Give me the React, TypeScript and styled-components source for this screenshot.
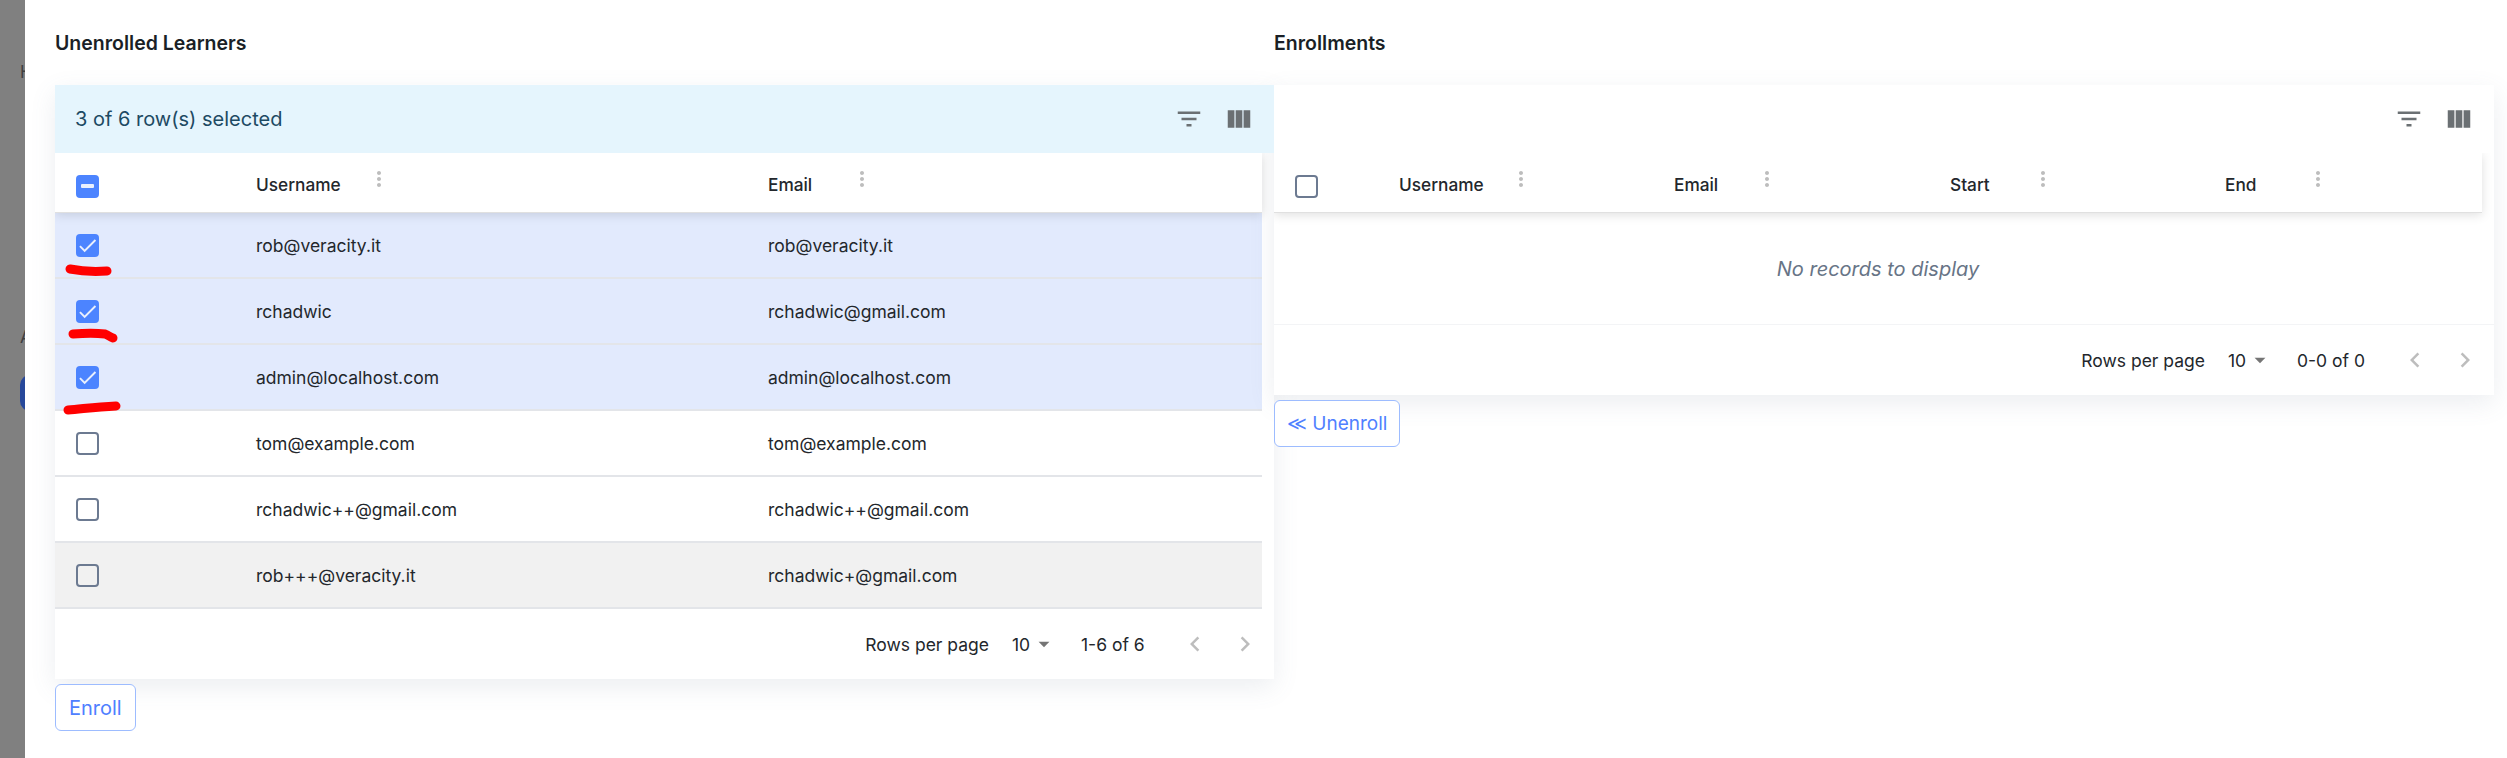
import * as React from "react";
import styled, { createGlobalStyle } from "styled-components";
import {
  MdFilterList,
  MdViewColumn,
  MdMoreVert,
  MdKeyboardArrowLeft,
  MdKeyboardArrowRight,
  MdArrowDropDown,
  MdCheck
} from "react-icons/md";

const GlobalStyle = createGlobalStyle`
  html, body, #root {
    margin: 0;
    height: 100%;
    overflow: hidden;
  }

  body {
    font-family: Inter, "Liberation Sans", sans-serif;
    color: #1a1f26;
    background: #fff;
  }

  * {
    box-sizing: border-box;
  }
`;

const Page = styled.div`
  position: relative;
  display: flex;
  height: 758px;
`;

const Backdrop = styled.div`
  width: 25px;
  flex: none;
  overflow: hidden;
  background: #808080;
  padding: 62px 0 0 20px;
  color: #3f3f3f;
  font-size: 17px;
  line-height: 20px;
  white-space: nowrap;
`;

const BackdropText = styled.div<{ $gap: number }>`
  margin-top: ${(p) => p.$gap}px;
`;

const BackdropPill = styled.div`
  margin-top: 28px;
  width: 40px;
  height: 36px;
  border-radius: 10px;
  background: #27489a;
`;

const Drawer = styled.div`
  flex: 1;
  display: grid;
  grid-template-columns: 1219px 1220px;
  padding-left: 30px;
  background: #fff;
`;

const Column = styled.section`
  display: flex;
  flex-direction: column;
  align-items: flex-start;
`;

const Title = styled.h2`
  margin: 0;
  height: 85px;
  padding-top: 32px;
  font-size: 19.5px;
  line-height: 22px;
  font-weight: 600;
  color: #1a1f26;
`;

const Card = styled.div`
  width: 100%;
  overflow: hidden;
  background: #fff;
  box-shadow: 0 8px 24px rgba(100, 116, 139, 0.12);
`;

const Toolbar = styled.div<{ $selected?: boolean }>`
  position: relative;
  z-index: 2;
  height: 68px;
  display: flex;
  align-items: center;
  padding: 0 10px 0 20px;
  background: ${(p) => (p.$selected ? "#e5f5fd" : "#fff")};
  color: #1d4a63;
  font-size: 20px;
`;

const ToolbarLabel = styled.div`
  flex: 1;
`;

const ToolButton = styled.span`
  width: 50px;
  height: 50px;
  display: flex;
  align-items: center;
  justify-content: center;
  color: #6b7073;
  font-size: 30px;
`;

const TableArea = styled.div`
  margin-right: 12px;
`;

const HeaderRow = styled.div<{ $columns: string }>`
  position: relative;
  z-index: 1;
  display: grid;
  grid-template-columns: ${(p) => p.$columns};
  height: 60px;
  align-items: center;
  background: #fff;
  border-bottom: 1px solid #e0e0e0;
  box-shadow: 0 2px 10px rgba(0, 0, 0, 0.13);
`;

const HeaderCell = styled.div`
  display: flex;
  align-items: center;
  font-size: 17.25px;
  font-weight: 500;
  color: #23272c;
  margin-top: 3px;
`;

const HeaderLabel = styled.span<{ $width: number }>`
  width: ${(p) => p.$width}px;
`;

const ColumnMenu = styled.span`
  display: flex;
  color: #bdbdbd;
  font-size: 24px;
  margin-top: -10px;
`;

const CheckCell = styled.div<{ $nudge?: number }>`
  padding-left: 21px;
  margin-top: ${(p) => p.$nudge || 0}px;
  display: flex;
  align-items: center;
`;

const CheckBox = styled.span<{ $on?: boolean }>`
  width: 23px;
  height: 23px;
  display: flex;
  align-items: center;
  justify-content: center;
  border-radius: 4px;
  color: #e9effd;
  font-size: 25px;
  background: ${(p) => (p.$on ? "#4c84ff" : "transparent")};
  border: ${(p) => (p.$on ? "none" : "2.5px solid #6c7a91")};
`;

const Dash = styled.span`
  width: 13px;
  height: 4px;
  border-radius: 1px;
  background: #e9effd;
`;

const Row = styled.div<{ $columns: string; $tone: string }>`
  display: grid;
  grid-template-columns: ${(p) => p.$columns};
  height: 66px;
  align-items: center;
  border-bottom: 2px solid #e3e5e9;
  background: ${(p) => p.$tone};
  font-size: 17.5px;
  color: #23272c;
`;

const EmptyRow = styled.div`
  height: 112px;
  display: flex;
  align-items: center;
  justify-content: center;
  padding-right: 12px;
  border-bottom: 1px solid #f3f4f6;
  font-size: 20px;
  font-style: italic;
  color: #677486;
`;

const Footer = styled.div`
  height: 70px;
  display: flex;
  align-items: center;
  justify-content: flex-end;
  padding-right: 4px;
  font-size: 17.5px;
  color: #23272c;
`;

const PageSize = styled.span`
  display: flex;
  align-items: center;
  margin-left: 23px;
  width: 69px;

  svg {
    font-size: 26px;
    color: #757575;
    margin-left: 1px;
  }
`;

const Range = styled.span<{ $width: number }>`
  width: ${(p) => p.$width}px;
`;

const PageButton = styled.span`
  width: 50px;
  height: 50px;
  display: flex;
  align-items: center;
  justify-content: center;
  color: #bdbdbd;
  font-size: 30px;
`;

const ActionButton = styled.button<{ $size: number; $pad: number }>`
  margin-top: 5px;
  height: 47px;
  padding: 0 ${(p) => p.$pad}px;
  background: #fff;
  border: 1px solid #9dbcff;
  border-radius: 6px;
  color: #4f80ff;
  font-family: inherit;
  font-size: ${(p) => p.$size}px;
`;

const ThinGlyph = styled.span`
  font-family: "Liberation Sans", sans-serif;
  font-weight: 400;
`;

const Scribble = styled.svg<{ $left: number; $top: number }>`
  position: absolute;
  left: ${(p) => p.$left}px;
  top: ${(p) => p.$top}px;
  overflow: visible;
`;

const leftColumns = "201px 512px 1fr";
const rightColumns = "125px 275px 276px 275px 1fr";

const learners = [
  { name: "rob@veracity.it", email: "rob@veracity.it", selected: true },
  { name: "rchadwic", email: "rchadwic@gmail.com", selected: true },
  { name: "admin@localhost.com", email: "admin@localhost.com", selected: true },
  { name: "tom@example.com", email: "tom@example.com" },
  { name: "rchadwic++@gmail.com", email: "rchadwic++@gmail.com" },
  { name: "rob+++@veracity.it", email: "rchadwic+@gmail.com", hover: true }
];

const Head = ({ label, width }: { label: string; width: number }) => (
  <HeaderCell>
    <HeaderLabel $width={width}>{label}</HeaderLabel>
    <ColumnMenu>
      <MdMoreVert />
    </ColumnMenu>
  </HeaderCell>
);

const Tools = () => (
  <>
    <ToolButton>
      <MdFilterList />
    </ToolButton>
    <ToolButton>
      <MdViewColumn />
    </ToolButton>
  </>
);

const Pagination = ({ range, rangeWidth }: { range: string; rangeWidth: number }) => (
  <Footer>
    <span>Rows per page</span>
    <PageSize>
      10
      <MdArrowDropDown />
    </PageSize>
    <Range $width={rangeWidth}>{range}</Range>
    <PageButton>
      <MdKeyboardArrowLeft />
    </PageButton>
    <PageButton>
      <MdKeyboardArrowRight />
    </PageButton>
  </Footer>
);

const toneFor = (item: { selected?: boolean; hover?: boolean }) => {
  if (item.selected) return "#e2eafd";
  return item.hover ? "#f1f1f1" : "#fff";
};

export default function App() {
  return (
    <Page>
      <GlobalStyle />
      <Backdrop>
        <BackdropText $gap={0}>H</BackdropText>
        <BackdropText $gap={245}>A</BackdropText>
        <BackdropPill />
      </Backdrop>
      <Drawer>
        <Column>
          <Title>Unenrolled Learners</Title>
          <Card>
            <Toolbar $selected>
              <ToolbarLabel>3 of 6 row(s) selected</ToolbarLabel>
              <Tools />
            </Toolbar>
            <TableArea>
              <HeaderRow $columns={leftColumns}>
                <CheckCell $nudge={7}>
                  <CheckBox $on>
                    <Dash />
                  </CheckBox>
                </CheckCell>
                <Head label="Username" width={111} />
                <Head label="Email" width={82} />
              </HeaderRow>
              {learners.map((item) => (
                <Row key={item.name} $columns={leftColumns} $tone={toneFor(item)}>
                  <CheckCell>
                    <CheckBox $on={item.selected}>{item.selected ? <MdCheck /> : null}</CheckBox>
                  </CheckCell>
                  <span>{item.name}</span>
                  <span>{item.email}</span>
                </Row>
              ))}
            </TableArea>
            <Pagination range="1-6 of 6" rangeWidth={89} />
          </Card>
          <ActionButton $size={20} $pad={13}>
            Enroll
          </ActionButton>
        </Column>
        <Column>
          <Title>Enrollments</Title>
          <Card>
            <Toolbar>
              <ToolbarLabel />
              <Tools />
            </Toolbar>
            <TableArea>
              <HeaderRow $columns={rightColumns}>
                <CheckCell $nudge={7}>
                  <CheckBox />
                </CheckCell>
                <Head label="Username" width={110} />
                <Head label="Email" width={81} />
                <Head label="Start" width={81} />
                <Head label="End" width={81} />
              </HeaderRow>
            </TableArea>
            <EmptyRow>No records to display</EmptyRow>
            <Pagination range="0-0 of 0" rangeWidth={93} />
          </Card>
          <ActionButton $size={19} $pad={12}>
            <ThinGlyph>≪</ThinGlyph> Unenroll
          </ActionButton>
        </Column>
      </Drawer>
      <Scribble $left={66} $top={266} width="45" height="9">
        <path d="M4 3 C14 5 26 6 41 5" fill="none" stroke="#f00" strokeWidth="9" strokeLinecap="round" />
      </Scribble>
      <Scribble $left={69} $top={330} width="48" height="12">
        <path d="M4 4 C16 3 28 3 36 4 C39 5 41 7 44 8" fill="none" stroke="#f00" strokeWidth="9" strokeLinecap="round" />
      </Scribble>
      <Scribble $left={64} $top={402} width="56" height="12">
        <path d="M4 8 C18 7 30 5 52 4" fill="none" stroke="#f00" strokeWidth="9" strokeLinecap="round" />
      </Scribble>
    </Page>
  );
}
